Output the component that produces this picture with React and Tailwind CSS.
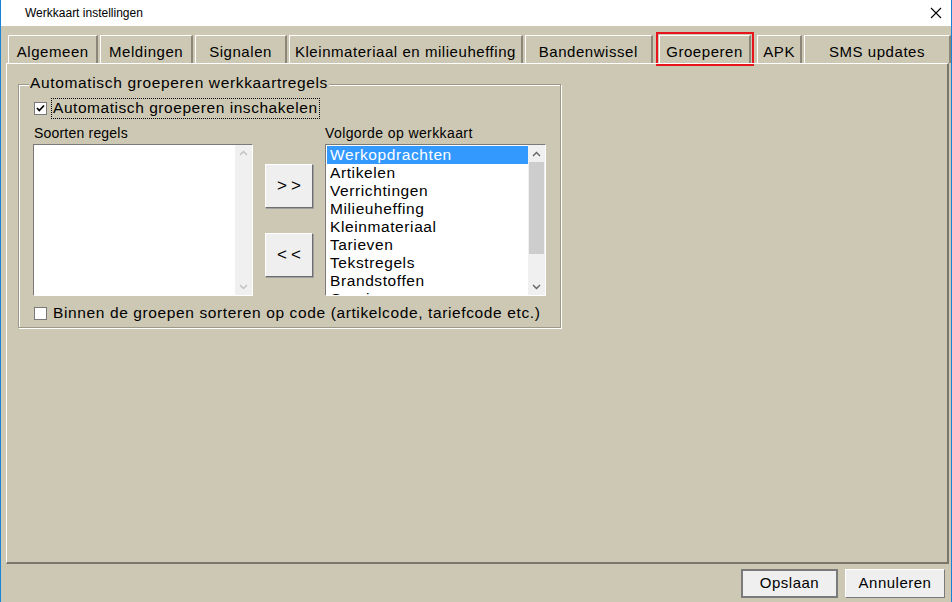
import React from "react";

const F = { fontFamily: '"Liberation Sans", Arial, sans-serif' };

function Tab({ label, w, selected }) {
  return (
    <div
      className={
        "h-[28px] flex items-center justify-center text-[15px] tracking-[0.55px] text-black bg-[#cdc8b4] border-t border-l border-white border-r-2 border-r-[#8a8778] " +
        (selected ? "outline-2 outline-[#e8141b] outline-offset-[1px]" : "")
      }
      style={{ width: w }}
    >
      <span className="leading-none pt-[3px]">{label}</span>
    </div>
  );
}

function Chevron({ up, color = "#a0a0a0" }) {
  return (
    <svg width="9" height="6" viewBox="0 0 9 6">
      <path
        d={up ? "M1 5 L4.5 1.5 L8 5" : "M1 1 L4.5 4.5 L8 1"}
        fill="none"
        stroke={color}
        strokeWidth="1.3"
      />
    </svg>
  );
}

function Checkbox({ checked }) {
  return (
    <div className="w-[13px] h-[13px] bg-white border border-[#7a7a7a] flex items-center justify-center">
      {checked && (
        <svg width="9" height="9" viewBox="0 0 9 9">
          <path d="M1 4 L3.3 6.5 L8 1.5" fill="none" stroke="#000" strokeWidth="1.8" />
        </svg>
      )}
    </div>
  );
}

function ArrowButton({ label }) {
  return (
    <div className="w-[48px] h-[44px] bg-[#efefef] border border-white border-r-[#6e6e6e] border-b-[#6e6e6e] shadow-[1px_1px_0_#a0a0a0] flex items-center justify-center text-[17px] tracking-[4px] pl-[4px]">
      {label}
    </div>
  );
}

export default function App() {
  const items = [
    "Werkopdrachten",
    "Artikelen",
    "Verrichtingen",
    "Milieuheffing",
    "Kleinmateriaal",
    "Tarieven",
    "Tekstregels",
    "Brandstoffen",
    "Overige",
  ];
  return (
    <div
      className="w-[952px] h-[602px] flex flex-col bg-[#cdc8b4] border-l border-r border-[#1883d7] overflow-hidden"
      style={F}
    >
      {/* title bar */}
      <div className="h-[26px] bg-white flex items-center justify-between shrink-0">
        <span className="ml-[24px] text-[12px] text-black">Werkkaart instellingen</span>
        <svg width="12" height="12" viewBox="0 0 12 12" className="mr-[9px]">
          <path d="M1 1 L11 11 M11 1 L1 11" stroke="#000" strokeWidth="1.1" />
        </svg>
      </div>

      {/* tabs */}
      <div className="flex gap-[2px] pl-[7px] mt-[9px] h-[28px] shrink-0">
        <Tab label="Algemeen" w={91} />
        <Tab label="Meldingen" w={93} />
        <Tab label="Signalen" w={93} />
        <Tab label="Kleinmateriaal en milieuheffing" w={235} />
        <Tab label="Bandenwissel" w={129} />
        <div className="w-[2px]" />
        <Tab label="Groeperen" w={93} selected />
        <div className="w-[2px]" />
        <Tab label="APK" w={45} />
        <Tab label="SMS updates" w={148} />
      </div>

      {/* tab panel */}
      <div className="ml-[5px] w-[943px] h-[501px] border-t border-l border-white border-r-2 border-b-2 border-r-[#7a776a] border-b-[#7a776a] shrink-0 pt-[20px] pl-[11px]">
        {/* group box */}
        <div className="relative w-[543px] h-[244px] border border-[#9c988a] shadow-[inset_1px_1px_0_#fff,1px_1px_0_#fff] pl-[14px] pt-[13px]">
          <div className="absolute left-[10px] -top-[11px] bg-[#cdc8b4] px-[1px] text-[15.5px] tracking-[0.65px] leading-[18px] text-black">
            Automatisch groeperen werkkaartregels
          </div>

          <div className="flex items-center h-[20px]">
            <div className="ml-[1px]">
              <Checkbox checked />
            </div>
            <div className="ml-[4px] border border-dotted border-black px-[1px] h-[21px] flex items-center text-[15.5px] tracking-[0.55px] text-black">
              Automatisch groeperen inschakelen
            </div>
          </div>

          <div className="flex mt-[7px]">
            <div className="flex flex-col">
              <span className="ml-[1px] text-[14px] tracking-[0.2px] leading-[16px] h-[19px] text-black">Soorten regels</span>
              <div className="w-[220px] h-[152px] bg-white border border-[#7a7a7a] border-r-white border-b-white flex justify-end">
                <div className="w-[17px] h-full bg-[#f0f0f0] flex flex-col items-center justify-between py-[5px]">
                  <Chevron up color="#c0c0c0" />
                  <Chevron color="#c0c0c0" />
                </div>
              </div>
            </div>

            <div className="flex flex-col gap-[25px] ml-[12px] mt-[39px]">
              <ArrowButton label=">>" />
              <ArrowButton label="<<" />
            </div>

            <div className="flex flex-col ml-[12px]">
              <span className="text-[14px] tracking-[0.4px] leading-[16px] h-[19px] text-black">Volgorde op werkkaart</span>
              <div className="w-[221px] h-[152px] bg-white border border-[#7a7a7a] border-r-white border-b-white flex overflow-hidden">
                <div className="flex-1 flex flex-col pt-[1px] pl-[1px]">
                  {items.map((it, i) => (
                    <div
                      key={it}
                      className={
                        "h-[18px] shrink-0 pl-[3px] text-[15.5px] tracking-[0.6px] leading-[18px] " +
                        (i === 0 ? "bg-[#3399ff] text-white" : "text-black")
                      }
                    >
                      {it}
                    </div>
                  ))}
                </div>
                <div className="w-[17px] h-full bg-[#f0f0f0] flex flex-col items-center">
                  <div className="h-[17px] flex items-center justify-center">
                    <Chevron up color="#606060" />
                  </div>
                  <div className="w-[15px] h-[92px] bg-[#cdcdcd]" />
                  <div className="flex-1" />
                  <div className="h-[17px] flex items-center justify-center">
                    <Chevron color="#606060" />
                  </div>
                </div>
              </div>
            </div>
          </div>

          <div className="flex items-center mt-[8px]">
            <div className="ml-[1px]">
              <Checkbox />
            </div>
            <span className="ml-[6px] text-[15.5px] tracking-[0.62px] text-black leading-[18px]">
              Binnen de groepen sorteren op code (artikelcode, tariefcode etc.)
            </span>
          </div>
        </div>
      </div>

      {/* bottom buttons */}
      <div className="flex justify-end gap-[7px] pr-[6px] mt-[5px]">
        <div className="w-[97px] h-[29px] bg-[#efefef] border-2 border-[#7a7a7a] flex items-center justify-center text-[15px] tracking-[0.5px] text-black">
          Opslaan
        </div>
        <div className="w-[100px] h-[29px] bg-[#efefef] border border-white border-r-[#7a7a7a] border-b-[#7a7a7a] flex items-center justify-center text-[15px] tracking-[0.5px] text-black">
          Annuleren
        </div>
      </div>
    </div>
  );
}
